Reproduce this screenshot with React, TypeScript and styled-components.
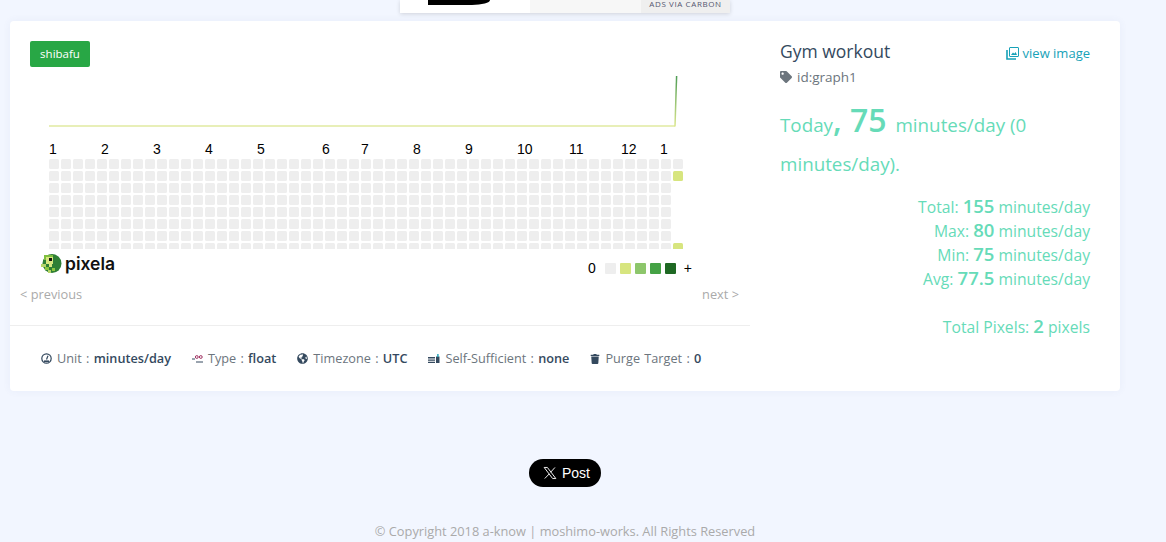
import React from "react";
import styled, { createGlobalStyle } from "styled-components";
import { FaGlobeAmericas, FaTag, FaTrash } from "react-icons/fa";

const GlobalStyle = createGlobalStyle`
  html, body {
    margin: 0;
    padding: 0;
    height: 542px;
    overflow: hidden;
    background: #f2f6ff;
    font-family: "Open Sans", "Noto Sans", sans-serif;
  }
`;

const Page = styled.div`
  width: 1110px;
  margin-left: 10px;
`;

const AdBar = styled.div`
  width: 330px;
  height: 13px;
  margin-left: 390px;
  display: flex;
  overflow: hidden;
  background: #fff;
  box-shadow: 0 1px 4px rgb(0 0 0 / 15%);
`;

const AdImage = styled.div`
  width: 130px;
  padding-left: 28px;
  box-sizing: border-box;
`;

const AdBlot = styled.div`
  width: 62px;
  height: 5px;
  background: #000;
  border-bottom-right-radius: 18px 5px;
`;

const AdText = styled.div`
  width: 111px;
  background: #f7f7f7;
`;

const AdLabel = styled.div`
  flex: 1;
  background: #efefef;
  color: #555770;
  font-size: 8px;
  line-height: 8px;
  letter-spacing: 0.6px;
  text-align: center;
  white-space: nowrap;
`;

const Card = styled.section`
  margin-top: 8px;
  height: 370px;
  display: flex;
  background: #fff;
  border-radius: 4px;
  box-shadow: 0 0 8px rgb(60 90 160 / 6%);
`;

const LeftPane = styled.div`
  width: 740px;
  flex-shrink: 0;
`;

const GraphArea = styled.div`
  height: 305px;
  padding: 20px 10px 0;
  box-sizing: border-box;
  border-bottom: 1px solid #eeeeee;
`;

const Badge = styled.span`
  display: block;
  width: 60px;
  margin-left: 10px;
  height: 26px;
  line-height: 26px;
  text-align: center;
  font-size: 11.5px;
  color: #fff;
  background: #28a745;
  border-radius: 2px;
`;

const HeatSvg = styled.svg`
  display: block;
  width: 720px;
  height: 182px;
  margin-bottom: 1px;
`;

const GraphFooter = styled.div`
  display: flex;
  align-items: flex-start;
  justify-content: space-between;
  height: 35px;
  padding: 0 48px 0 20px;
`;

const Logo = styled.div`
  display: flex;
  align-items: center;
  gap: 3px;
  height: 27px;
  color: #111;
  font-family: "Inter", sans-serif;
  font-size: 17.5px;
  font-weight: 600;
`;

const Legend = styled.div`
  display: flex;
  align-items: center;
  gap: 4px;
  margin-top: 10px;
  font-family: "Liberation Sans", sans-serif;
  font-size: 14px;
  color: #000;
`;

const LegendCell = styled.i<{ $color: string }>`
  width: 11px;
  height: 11px;
  border-radius: 1px;
  background: ${(p) => p.$color};
`;

const LegendEdge = styled.span<{ $first?: boolean }>`
  margin: ${(p) => (p.$first ? "0 5px 0 0" : "0 0 0 4px")};
`;

const Pager = styled.div`
  display: flex;
  justify-content: space-between;
  color: #aaaaaa;
  font-size: 12.8px;
  line-height: 18px;
  padding-right: 1px;
`;

const InfoRow = styled.ul`
  list-style: none;
  margin: 0;
  padding: 24px 0 0 31px;
  display: flex;
  gap: 21px;
  font-size: 12.7px;
  word-spacing: 1px;
  line-height: 17px;
  color: #6c757d;
`;

const InfoItem = styled.li`
  display: flex;
  align-items: center;
  gap: 5px;
  white-space: nowrap;
`;

const InfoValue = styled.b`
  font-weight: 600;
  color: #34495e;
`;

const RightPane = styled.div`
  flex: 1;
  padding: 18px 30px 0;
  color: #66dbb8;
`;

const TitleRow = styled.div`
  display: flex;
  align-items: center;
  justify-content: space-between;
  height: 24px;
`;

const Title = styled.h2`
  margin: 0;
  font-size: 17.5px;
  font-weight: 500;
  color: #34495e;
`;

const ViewImage = styled.a`
  display: flex;
  align-items: center;
  gap: 4px;
  padding-top: 4px;
  color: #17a2b8;
  font-size: 13px;
`;

const GraphId = styled.div`
  display: flex;
  align-items: center;
  gap: 5px;
  margin-top: 3px;
  height: 22px;
  font-size: 13.5px;
  color: #6c757d;
`;

const Today = styled.p`
  margin: 16px 0 0;
  font-size: 18.8px;
  line-height: 39px;
`;

const TodayNumber = styled.b`
  font-size: 32px;
  font-weight: 600;
  line-height: 1;
  margin-right: 4px;
`;

const Stats = styled.div`
  margin-top: 11px;
  text-align: right;
  font-size: 15.7px;
  line-height: 24px;
`;

const StatNumber = styled.b`
  font-size: 18.5px;
  font-weight: 600;
  line-height: 1;
`;

const TotalPixels = styled.div`
  margin-top: 24px;
  text-align: right;
  font-size: 15.7px;
  line-height: 24px;
`;

const ShareRow = styled.div`
  margin-top: 68px;
  display: flex;
  justify-content: center;
`;

const PostButton = styled.a`
  width: 72px;
  height: 28px;
  box-sizing: border-box;
  padding-left: 14px;
  display: flex;
  align-items: center;
  gap: 5px;
  border-radius: 14px;
  background: #000;
  color: #fff;
  font-family: "Liberation Sans", sans-serif;
  font-size: 14px;
`;

const Copyright = styled.footer`
  margin-top: 35px;
  text-align: center;
  color: #aaaaaa;
  font-size: 12.8px;
  line-height: 18px;
`;

const months = [
  [49, "1"], [101, "2"], [153, "3"], [205, "4"], [257, "5"], [322, "6"], [361, "7"],
  [413, "8"], [465, "9"], [517, "10"], [569, "11"], [621, "12"], [660, "1"],
] as const;

const weeks = Array.from({ length: 53 }, (_, i) => i);
const days = [0, 1, 2, 3, 4, 5, 6, 7];

function cellColor(week: number, day: number) {
  if (week === 52) {
    if (day === 1 || day === 7) return "#d7e57f";
    if (day > 1) return "none";
  }
  return "#eeeeee";
}

// pixel heat map with the line chart above it; coordinates are the chart's own
function HeatMap() {
  return (
    <HeatSvg viewBox="20 67 720 182">
      <defs>
        <linearGradient id="spike" gradientUnits="userSpaceOnUse" x1="675" y1="126" x2="675" y2="76">
          <stop offset="0" stopColor="#dbe78e" />
          <stop offset="1" stopColor="#4f9d55" />
        </linearGradient>
      </defs>
      <path d="M49 126H675" stroke="#e8efb8" strokeWidth="2" fill="none" />
      <path d="M675 126.5L676.6 76" stroke="url(#spike)" strokeWidth="1.5" fill="none" />
      {months.map(([x, label], i) => (
        <text key={i} x={x} y={154} fontFamily="Liberation Sans, sans-serif" fontSize="14" fill="#000">
          {label}
        </text>
      ))}
      {weeks.map((w) =>
        days.map((d) => (
          <rect
            key={`${w}-${d}`}
            x={49 + w * 12}
            y={159 + d * 12}
            width="10"
            height="10"
            rx="1.5"
            fill={cellColor(w, d)}
          />
        ))
      )}
    </HeatSvg>
  );
}

function LogoMark() {
  return (
    <svg width="22" height="22" viewBox="0 0 22 22">
      <circle cx="12" cy="10.5" r="9.5" fill="#2f7f35" />
      <path d="M4 2h9v5H4z" fill="#7fbf3f" />
      <rect x="6" y="4" width="7" height="7" fill="#d7e57f" />
      <rect x="9" y="5" width="3" height="3" fill="#111" />
      <rect x="1" y="11" width="5" height="3" fill="#b5d56a" />
      <rect x="5" y="14" width="4" height="3" fill="#8cc63f" />
      <rect x="9" y="11" width="3" height="3" fill="#d7e57f" />
      <rect x="8" y="17" width="3" height="3" fill="#b5d56a" />
      <rect x="12" y="15" width="3" height="3" fill="#8cc63f" />
    </svg>
  );
}

function GaugeIcon() {
  return (
    <svg width="11" height="11" viewBox="0 0 11 11">
      <circle cx="5.5" cy="5.5" r="4.7" fill="none" stroke="#34495e" strokeWidth="1.2" />
      <path d="M5.5 6.5L7 2.8" stroke="#34495e" strokeWidth="1.2" />
      <path d="M3 8.2h5" stroke="#34495e" strokeWidth="1.6" />
    </svg>
  );
}

function TypeIcon() {
  return (
    <svg width="11" height="11" viewBox="0 0 11 11">
      <path d="M0 6h3M4 9h7" stroke="#34495e" strokeWidth="1" />
      <circle cx="4.8" cy="4" r="1.4" fill="none" stroke="#a03060" strokeWidth="1" />
      <circle cx="8.8" cy="4" r="1.4" fill="none" stroke="#a03060" strokeWidth="1" />
    </svg>
  );
}

function SufficientIcon() {
  return (
    <svg width="12" height="11" viewBox="0 0 12 11">
      <path d="M0 4h7v1.4H0zM0 6.4h7v1.4H0zM0 8.8h7V10H0z" fill="#34495e" />
      <path d="M8 3.5h3.5V10H8z" fill="#34495e" />
      <path d="M9.2 1h1.4v3H9.2z" fill="#17a2b8" />
    </svg>
  );
}

function ImagesIcon() {
  return (
    <svg width="13" height="13" viewBox="0 0 13 13">
      <rect x="3.5" y="0.5" width="9" height="9" rx="0.5" fill="none" stroke="currentColor" />
      <path d="M5 8l2-2.5 1.3 1.2L9.6 5 11 8z" fill="currentColor" />
      <path d="M1 3v9h9" fill="none" stroke="currentColor" strokeWidth="1.6" />
    </svg>
  );
}

function XIcon() {
  return (
    <svg width="14" height="14" viewBox="0 0 24 24">
      <path
        fill="none"
        stroke="#fff"
        strokeWidth="1.6"
        d="M2 2.5h5.5L22 21.5h-5.5zM20.5 2.5L13 10.8M10.8 13.4L3 21.5"
      />
    </svg>
  );
}

export default function App() {
  return (
    <>
      <GlobalStyle />
      <Page>
        <AdBar>
          <AdImage>
            <AdBlot />
          </AdImage>
          <AdText />
          <AdLabel>ADS VIA CARBON</AdLabel>
        </AdBar>
        <Card>
          <LeftPane>
            <GraphArea>
              <Badge>shibafu</Badge>
              <HeatMap />
              <GraphFooter>
                <Logo>
                  <LogoMark />
                  pixela
                </Logo>
                <Legend>
                  <LegendEdge $first>0</LegendEdge>
                  <LegendCell $color="#eeeeee" />
                  <LegendCell $color="#d7e57f" />
                  <LegendCell $color="#8dc66b" />
                  <LegendCell $color="#45a245" />
                  <LegendCell $color="#1e6823" />
                  <LegendEdge>+</LegendEdge>
                </Legend>
              </GraphFooter>
              <Pager>
                <span>&lt; previous</span>
                <span>next &gt;</span>
              </Pager>
            </GraphArea>
            <InfoRow>
              <InfoItem>
                <GaugeIcon />
                <span>Unit : <InfoValue>minutes/day</InfoValue></span>
              </InfoItem>
              <InfoItem>
                <TypeIcon />
                <span>Type : <InfoValue>float</InfoValue></span>
              </InfoItem>
              <InfoItem>
                <FaGlobeAmericas size={11} color="#34495e" />
                <span>Timezone : <InfoValue>UTC</InfoValue></span>
              </InfoItem>
              <InfoItem>
                <SufficientIcon />
                <span>Self-Sufficient : <InfoValue>none</InfoValue></span>
              </InfoItem>
              <InfoItem>
                <FaTrash size={10} color="#34495e" />
                <span>Purge Target : <InfoValue>0</InfoValue></span>
              </InfoItem>
            </InfoRow>
          </LeftPane>
          <RightPane>
            <TitleRow>
              <Title>Gym workout</Title>
              <ViewImage>
                <ImagesIcon />
                view image
              </ViewImage>
            </TitleRow>
            <GraphId>
              <FaTag size={12} />
              id:graph1
            </GraphId>
            <Today>
              Today<TodayNumber>, 75</TodayNumber> minutes/day (0 minutes/day).
            </Today>
            <Stats>
              <div>Total: <StatNumber>155</StatNumber> minutes/day</div>
              <div>Max: <StatNumber>80</StatNumber> minutes/day</div>
              <div>Min: <StatNumber>75</StatNumber> minutes/day</div>
              <div>Avg: <StatNumber>77.5</StatNumber> minutes/day</div>
            </Stats>
            <TotalPixels>
              Total Pixels: <StatNumber>2</StatNumber> pixels
            </TotalPixels>
          </RightPane>
        </Card>
        <ShareRow>
          <PostButton>
            <XIcon />
            Post
          </PostButton>
        </ShareRow>
        <Copyright>© Copyright 2018 a-know | moshimo-works. All Rights Reserved</Copyright>
      </Page>
    </>
  );
}
